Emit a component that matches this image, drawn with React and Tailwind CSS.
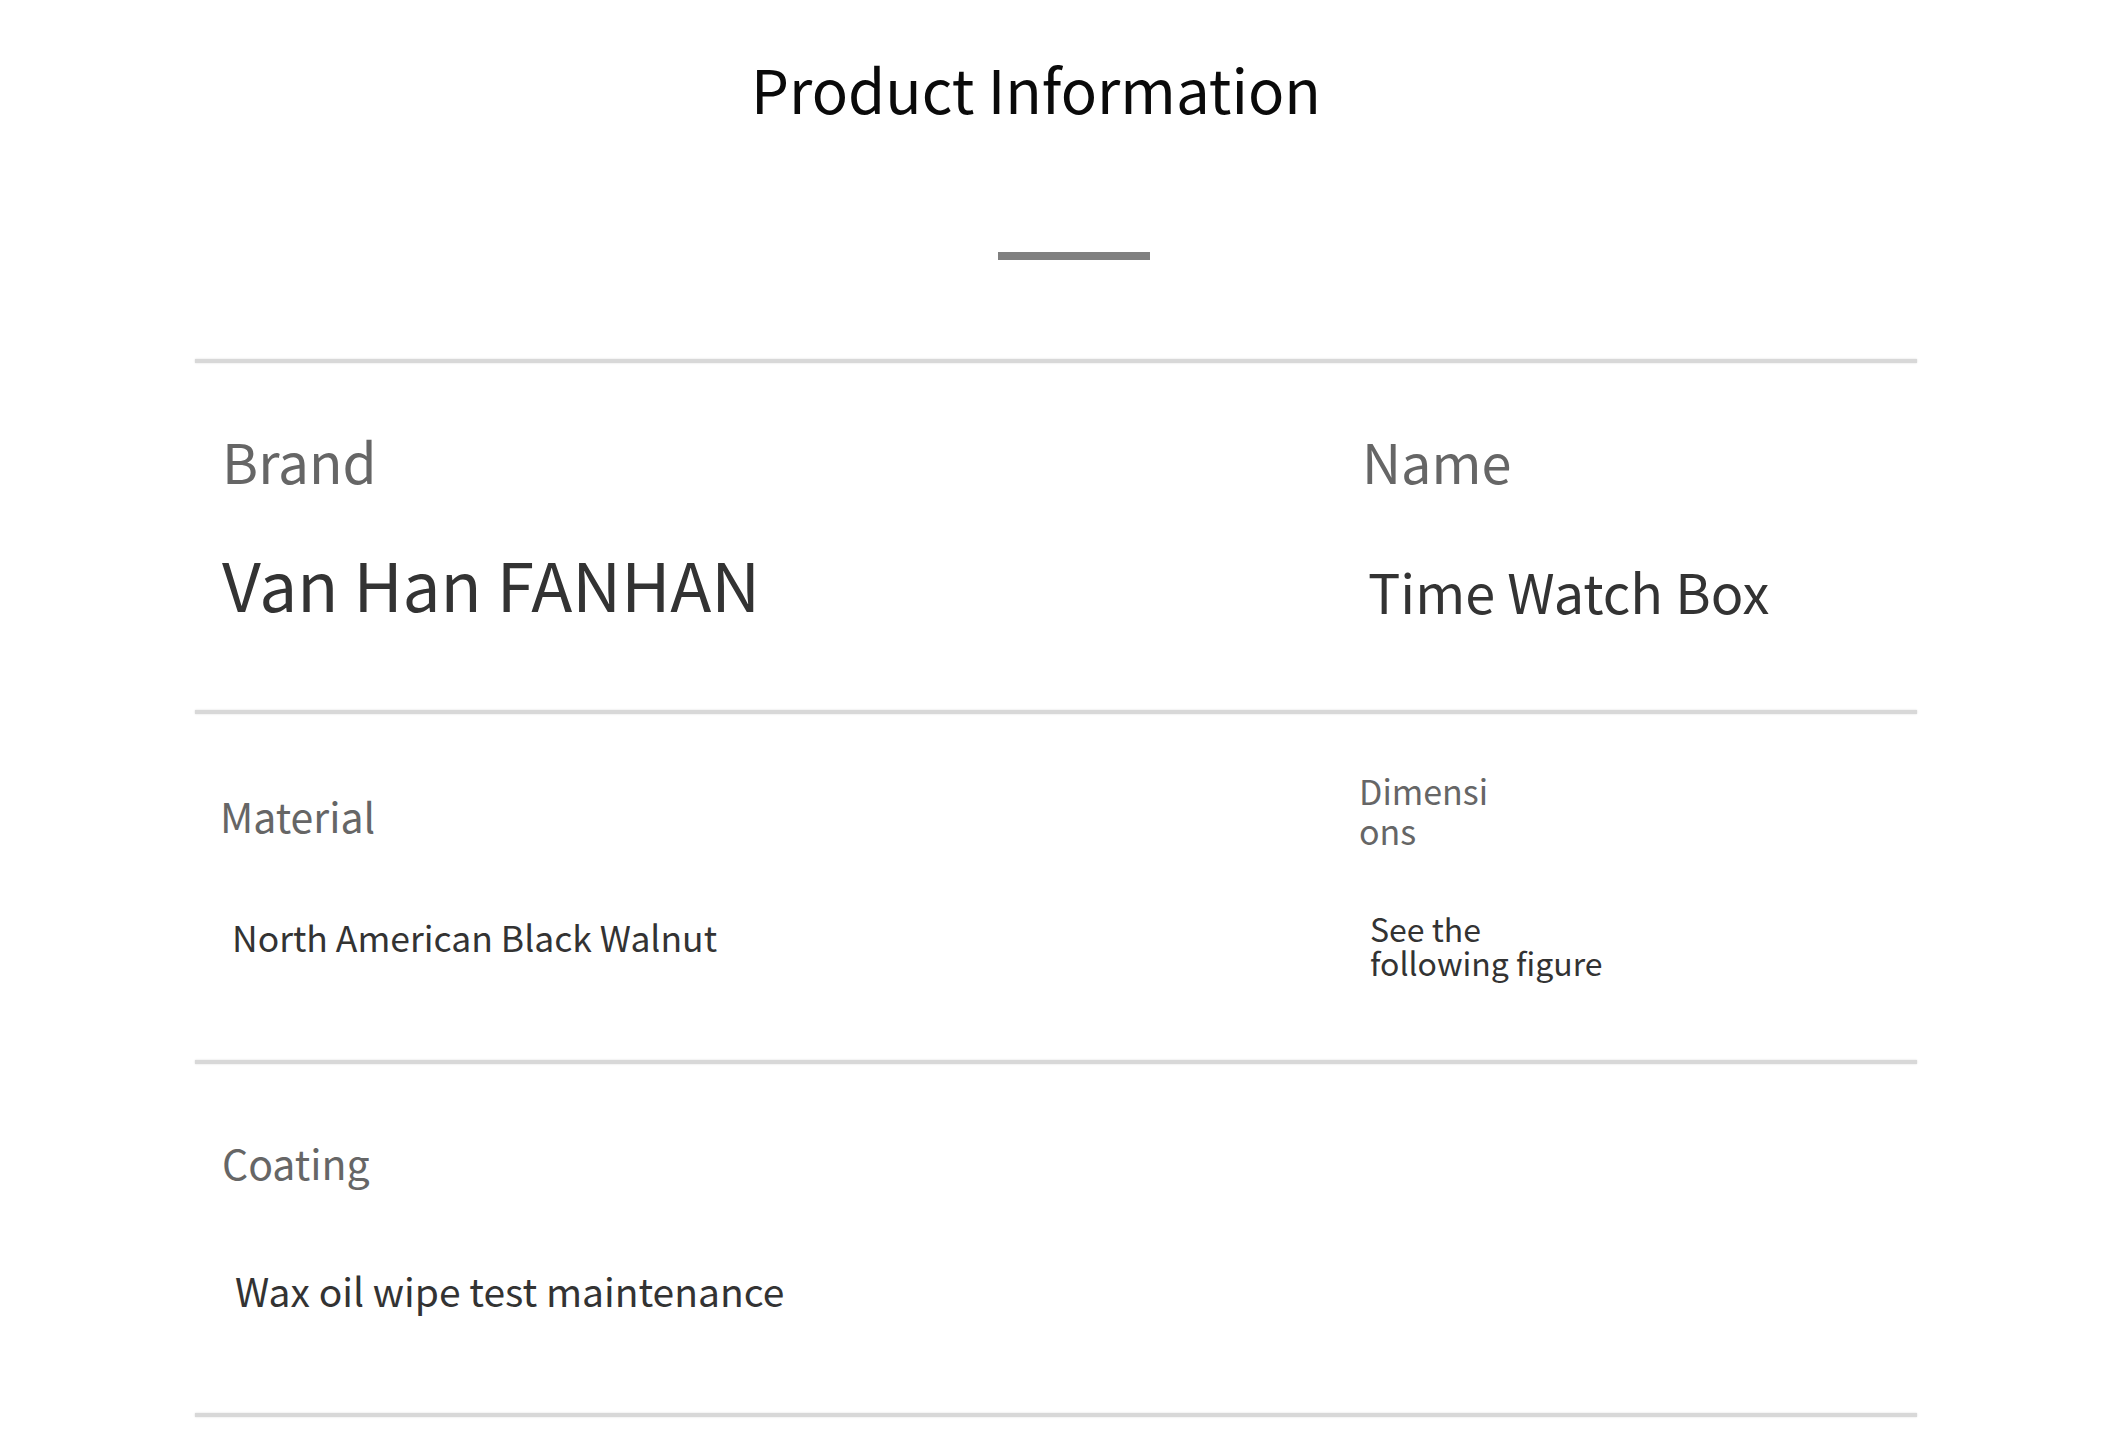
import React from "react";

const font = { fontFamily: '"Noto Sans CJK SC", "Noto Sans", sans-serif' };

const Divider = () => <div className="h-[4px] w-full bg-[#d8d8d8] shadow-[0_0_2px_#d8d8d8]" />;

const App = () => {
  return (
    <div className="min-h-screen w-[2114px] bg-white pt-[58px] pb-[30px]" style={font}>
      <h1 className="text-[60px] leading-none text-[#0a0a0a] text-center pr-[42px]">
        Product Information
      </h1>

      <div className="mt-[134px] ml-[998px] h-[8px] w-[152px] bg-[#808080]" />

      <div className="ml-[195px] w-[1722px] mt-[99px]">
        <Divider />

        {/* row 1 */}
        <div className="grid grid-cols-[1162px_1fr] h-[347px]">
          <div className="pl-[27px] pt-[70px]">
            <p className="text-[55px] leading-none text-[#666]">Brand</p>
            <p className="mt-[61px] text-[67.5px] leading-none text-[#333]">Van Han FANHAN</p>
          </div>
          <div className="pl-[5px] pt-[71px]">
            <p className="text-[54px] leading-none text-[#666]">Name</p>
            <p className="mt-[76px] ml-[6px] text-[54px] leading-none text-[#333]">Time Watch Box</p>
          </div>
        </div>

        <Divider />

        {/* row 2 */}
        <div className="grid grid-cols-[1162px_1fr] h-[346px]">
          <div className="pl-[25px] pt-[81px]">
            <p className="text-[41px] leading-none text-[#666]">Material</p>
            <p className="mt-[83px] ml-[12px] text-[35.5px] leading-none text-[#333]">
              North American Black Walnut
            </p>
          </div>
          <div className="pt-[57px] pl-[2px]">
            <p className="w-[135px] break-all text-[34px] leading-[40px] text-[#666]">Dimensions</p>
            <p className="mt-[60px] ml-[11px] w-[235px] text-[32px] leading-[34px] text-[#333]">
              See the following figure
            </p>
          </div>
        </div>

        <Divider />

        {/* row 3 */}
        <div className="grid grid-cols-[1162px_1fr] h-[349px]">
          <div className="pl-[27px] pt-[78px]">
            <p className="text-[41px] leading-none text-[#666]">Coating</p>
            <p className="mt-[88px] ml-[13px] text-[39px] leading-none text-[#333]">
              Wax oil wipe test maintenance
            </p>
          </div>
          <div />
        </div>

        <Divider />
      </div>
    </div>
  );
};

export default App;
